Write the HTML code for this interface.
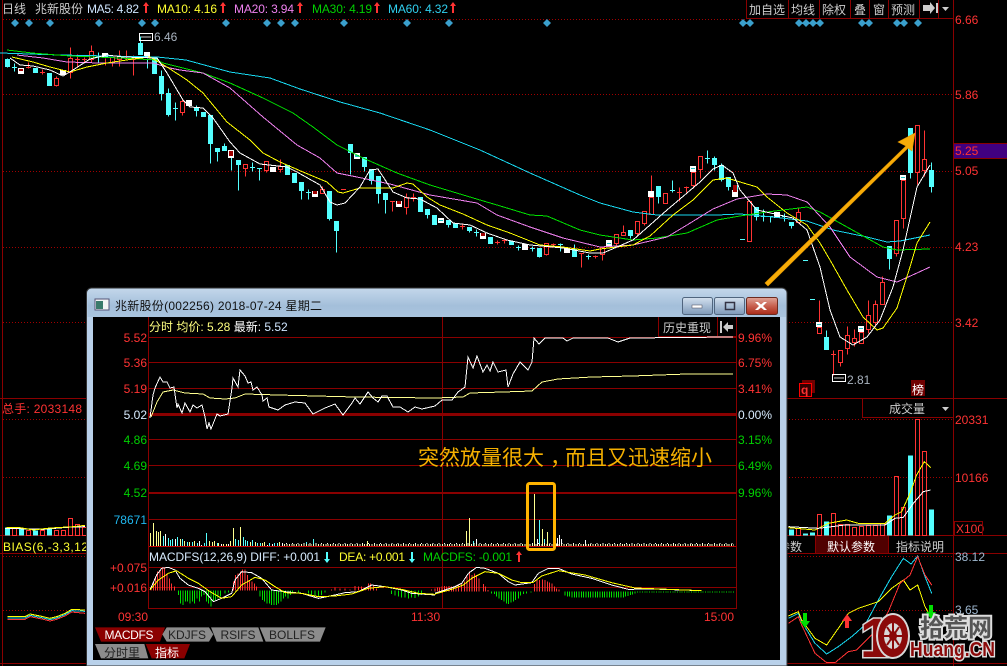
<!DOCTYPE html>
<html><head><meta charset="utf-8"><title>兆新股份</title>
<style>
html,body{margin:0;padding:0;background:#000;overflow:hidden}
svg{display:block}
text{font-family:"Liberation Sans","WenQuanYi Zen Hei","Noto Sans CJK SC",sans-serif;font-size:12px}
polyline{shape-rendering:crispEdges}
</style></head><body>
<svg width="1007" height="666" viewBox="0 0 1007 666" xmlns="http://www.w3.org/2000/svg">
<defs>
<linearGradient id="tb" x1="0" y1="0" x2="0" y2="1"><stop offset="0" stop-color="#c2d6ea"/><stop offset=".6" stop-color="#a4bfda"/><stop offset="1" stop-color="#a9c4de"/></linearGradient>
<linearGradient id="bn" x1="0" y1="0" x2="0" y2="1"><stop offset="0" stop-color="#d4e0ee"/><stop offset=".5" stop-color="#a8bdd4"/><stop offset="1" stop-color="#7f9ab8"/></linearGradient>
<linearGradient id="bx" x1="0" y1="0" x2="0" y2="1"><stop offset="0" stop-color="#e0a498"/><stop offset=".5" stop-color="#c8604f"/><stop offset="1" stop-color="#a82a18"/></linearGradient>
</defs>
<rect width="1007" height="666" fill="#000"/>

<!-- frame lines -->
<g stroke="#8a0000" fill="none" shape-rendering="crispEdges">
<path d="M2.5 0V666M953.5 0V666M0 398.5H953M0 535.5H953M0 553.5H953M0 663.5H953M953 398.5H1007M953 535.5H1007M953 553.5H1007M953 663.5H1007"/>
<path d="M746.5 0V18.5H953M788.5 0V18M819.5 0V18M850.5 0V18M869.5 0V18M888.5 0V18M919.5 0V18M938.5 0V18"/>
<path d="M862.5 398V417.5H953"/>
</g>
<g stroke="#a00000" stroke-dasharray="1 2" fill="none" shape-rendering="crispEdges">
<path d="M3 19.5H746M3 94.5H953M3 171.5H953M3 247.5H953M3 322.5H953M3 419.5H953M3 477.5H953M3 556.5H953M3 610.5H953"/>
</g>

<!-- top header -->
<text x="2" y="13" fill="#ccc">日线</text>
<text x="35" y="13" fill="#ccc" textLength="48">兆新股份</text>
<text x="87" y="13" textLength="52" fill="#cfe6ff">MA5: 4.82</text>
<text x="157" y="13" textLength="60" fill="#ffff30">MA10: 4.16</text>
<text x="234" y="13" textLength="60" fill="#ee80ee">MA20: 3.94</text>
<text x="312" y="13" textLength="60" fill="#00d000">MA30: 4.19</text>
<text x="388" y="13" textLength="60" fill="#30d0f0">MA60: 4.32</text>
<g fill="#f33">
<path d="M145 13V6h-2l3-4 3 4h-2v7z"/><path d="M222 13V6h-2l3-4 3 4h-2v7z"/><path d="M299 13V6h-2l3-4 3 4h-2v7z"/><path d="M376 13V6h-2l3-4 3 4h-2v7z"/><path d="M452 13V6h-2l3-4 3 4h-2v7z"/>
</g>
<g fill="#ccc" text-anchor="middle">
<text x="767" y="14">加自选</text><text x="803" y="14">均线</text><text x="834" y="14">除权</text><text x="860" y="14">叠</text><text x="879" y="14">窗</text><text x="903" y="14">预测</text>
</g>
<path d="M923 5h7V2l5 6-5 6v-3h-7zM936 3h2v10h-2z" fill="#ccc"/>
<path d="M942 7h7l-3.500 4z" fill="#ccc"/>

<!-- diamonds -->
<g fill="#3a9fcc">
<path d="M15 19l4 4-4 4-4-4zM29 19l4 4-4 4-4-4zM50 19l4 4-4 4-4-4zM99 19l4 4-4 4-4-4zM142 19l4 4-4 4-4-4zM155 19l4 4-4 4-4-4zM226 19l4 4-4 4-4-4zM267 19l4 4-4 4-4-4zM281 19l4 4-4 4-4-4zM295 19l4 4-4 4-4-4zM344 19l4 4-4 4-4-4zM407 19l4 4-4 4-4-4zM449 19l4 4-4 4-4-4zM547 19l4 4-4 4-4-4zM743 19l4 4-4 4-4-4zM750 19l4 4-4 4-4-4zM799 19l4 4-4 4-4-4zM806 19l4 4-4 4-4-4zM813 19l4 4-4 4-4-4zM820 19l4 4-4 4-4-4zM862 19l4 4-4 4-4-4zM869 19l4 4-4 4-4-4zM897 19l4 4-4 4-4-4zM904 19l4 4-4 4-4-4zM918 19l4 4-4 4-4-4z"/>
</g>

<!-- right axis labels -->
<rect x="954" y="143" width="53" height="16" fill="#400080"/>
<path d="M954 143.500H1007M954 158.500H1007" stroke="#8a0000"/>
<g fill="#f33">
<text x="955" y="24">6.66</text><text x="955" y="99">5.86</text><text x="955" y="155">5.25</text><text x="955" y="175">5.05</text><text x="955" y="251">4.23</text><text x="955" y="327">3.42</text>
<text x="955" y="424">20331</text><text x="955" y="482">10166</text><text x="956" y="533">X100</text>
<text x="2" y="413" textLength="80">总手: 2033148</text>
</g>
<rect x="954.500" y="521.500" width="28" height="14" fill="none" stroke="#8a0000"/>
<text x="955" y="561" fill="#9fb8d0">38.12</text><text x="955" y="614" fill="#9fb8d0">3.65</text>

<!-- candles -->
<g transform="translate(0,.5)" shape-rendering="crispEdges">
<path fill="#54ffff" stroke="#54ffff" d="M5.500 59h4V66h-4zM7.500 58V67M12 67h5M14.500 63V71M33.500 68h4V72h-4zM47.500 73h4V85h-4zM96 56h5M98.500 52V62M138.500 43h4V54h-4zM140.500 36V43M147.500 58V68M152.500 58h4V73h-4zM159.500 76h4V93h-4zM161.500 70V100M166.500 93h4V114h-4zM168.500 88V116M173 108h5M175.500 102V120M194.500 107h4V110h-4zM196.500 105V116M201.500 112h4V116h-4zM208.500 115h4V143h-4zM210.500 143V163M215.500 148h4V151h-4zM217.500 151V161M222.500 146h4V150h-4zM224.500 143V150M231.500 150V170M236.500 160h4V164h-4zM238.500 164V190M250 167h5M252.500 162V171M257 168h5M259.500 168V180M285.500 165h4V174h-4zM292.500 173h4V182h-4zM299.500 182h4V190h-4zM301.500 190V199M306 192h5M308.500 189V199M327.500 191h4V218h-4zM329.500 218V220M334.500 221h4V230h-4zM336.500 230V252M348.500 144h4V152h-4zM350.500 152V174M362.500 157h4V166h-4zM364.500 166V171M369.500 169h4V180h-4zM371.500 180V184M376.500 176h4V193h-4zM378.500 193V203M383.500 193h4V199h-4zM385.500 199V213M418.500 197h4V211h-4zM425.500 209h4V214h-4zM427.500 214V218M432.500 215h4V224h-4zM446.500 220h4V224h-4zM448.500 224V227M453.500 223h4V227h-4zM467.500 227h4V230h-4zM469.500 230V232M474 232h5M476.500 229V236M488.500 237h4V243h-4zM509.500 241h4V244h-4zM516 247h5M518.500 245V250M530 248h5M532.500 246V251M537.500 248h4V256h-4zM539.500 256V257M558 244h5M560.500 243V251M572.500 249h4V256h-4zM574.500 244V249M586 256h5M588.500 254V259M628.500 230h4V235h-4zM630.500 235V238M656.500 186h4V196h-4zM658.500 196V203M670 190h5M672.500 180V192M705 158h5M707.500 150V163M712.500 158h4V164h-4zM714.500 156V170M719.500 165h4V179h-4zM721.500 163V181M726.500 177h4V186h-4zM728.500 186V190M733.500 185h4V190h-4zM754.500 207h4V216h-4zM756.500 216V220M761 216h5M763.500 209V221M768 216h5M770.500 216V222M782 216h5M784.500 213V221M789.500 222h4V225h-4zM791.500 225V228M740 239h5M803 260h5M810 299h5M824.500 337h4V349h-4zM826.500 330V337M887.500 246h4V258h-4zM889.500 258V269M908.500 128h4V172h-4zM910.500 172V178M929.500 170h4V186h-4zM931.500 162V192"/>
<path fill="none" stroke="#f33" d="M26 67h5M28.500 62V68M40 72h5M42.500 69V74M54.500 78h4V85h-4zM56.500 76V78M56.500 85V86M68.500 58h4V72h-4zM70.500 47V58M70.500 72V78M75 59h5M77.500 54V66M82 59h5M84.500 57V62M89.500 51h4V59h-4zM91.500 45V51M91.500 59V62M105.500 58V65M110.500 57h4V62h-4zM112.500 62V66M117.500 56h4V59h-4zM119.500 50V56M119.500 59V66M126.500 50V60M131 59h5M133.500 55V75M180.500 101h4V112h-4zM182.500 98V101M182.500 112V115M243.500 164h4V168h-4zM245.500 168V176M264.500 161h4V170h-4zM266.500 170V172M278.500 166h4V169h-4zM280.500 159V166M280.500 169V172M320.500 189h4V193h-4zM322.500 186V189M341 189h5M390 201h5M392.500 201V211M404.500 197h4V207h-4zM406.500 193V197M406.500 207V214M411 197h5M413.500 193V201M460 226h5M462.500 224V229M495 242h5M497.500 240V244M502 240h5M504.500 238V243M544.500 243h4V254h-4zM546.500 254V255M551 244h5M553.500 243V246M579 253h5M581.500 253V267M593 256h5M595.500 255V258M600.500 247h4V254h-4zM602.500 254V260M614.500 234h4V243h-4zM616.500 243V245M621.500 232h4V235h-4zM623.500 225V232M635.500 221h4V233h-4zM637.500 233V235M642.500 211h4V223h-4zM644.500 223V225M649.500 197h4V214h-4zM651.500 175V191M663.500 193h4V203h-4zM677 192h5M679.500 187V201M684 187h5M686.500 186V192M691.500 172h4V185h-4zM693.500 185V188M698.500 156h4V169h-4zM700.500 169V178M747.500 201h4V241h-4zM796.500 212h4V222h-4zM798.500 208V212M798.500 222V223M817.500 327h4V333h-4zM819.500 300V322M831 354h5M833.500 350V375M838.500 350h4V362h-4zM840.500 362V366M845.500 335h4V348h-4zM847.500 326V335M847.500 348V354M852.500 338h4V342h-4zM854.500 329V338M854.500 342V346M859.500 332h4V343h-4zM866.500 315h4V329h-4zM868.500 300V315M868.500 329V333M873.500 304h4V322h-4zM875.500 300V304M875.500 322V325M880.500 282h4V304h-4zM882.500 276V282M894.500 220h4V253h-4zM896.500 253V256M901.500 180h4V218h-4zM903.500 218V228M915.500 125h4V172h-4zM917.500 172V184M922.500 159h4V170h-4zM924.500 130V159M924.500 170V176"/>
</g>
<!-- highlighted boxes -->
<path fill="#fff" d="M18 68h6v6h-6zM60 70h6v5h-6zM102 53h6v5h-6zM144 52h6v5h-6zM186 100h6v6h-6zM228 150h6v8h-6zM270 167h6v5h-6zM312 191h6v6h-6zM354 153h6v6h-6zM396 201h6v6h-6zM438 218h6v5h-6zM480 233h6v6h-6zM522 244h6v6h-6zM564 248h6v5h-6zM606 240h6v6h-6zM648 191h6v6h-6zM690 166h6v6h-6zM732 190h6v7h-6zM774 212h6v6h-6zM816 322h6v5h-6zM858 326h6v6h-6zM900 175h6v5h-6z"/>
<path fill="#a00000" d="M19 69h4v2h-4zM229 151h4v5h-4zM313 191h4v3h-4zM397 201h4v3h-4zM481 233h4v3h-4zM733 185h4v7h-4z"/>
<path fill="#20c0c0" d="M355 155h4v2h-4zM439 220h4v1h-4zM607 243h4v1h-4zM691 168h4v1h-4zM817 324h4v1h-4zM859 328h4v1h-4zM901 177h4v1h-4z"/>

<!-- MA lines -->
<g fill="none" stroke-width="1">
<polyline stroke="#18d8f0" points="0,53 60,55 157,57 186,60 230,72 270,78 300,89 340,102 380,113 430,130 480,150 530,173 580,195 600,203 633,212 657,215 717,215 740,214 773,217 807,221 833,230 867,237 887,242 900,241 930,235"/>
<polyline stroke="#00e000" points="7,50 32,53 70,56 120,58 157,60 163,63 203,73 230,83 263,98 293,113 313,127 337,145 363,158 397,173 430,185 480,200 497,205 530,215 547,216 580,230 600,235 633,240 657,238 687,233 717,220 740,216 767,212 807,207 820,212 847,227 883,247 897,250 930,249"/>
<polyline stroke="#ee80ee" points="17,55 43,58 67,62 100,63 153,63 170,68 180,70 203,73 230,88 263,117 297,145 320,158 337,173 357,177 390,184 430,195 477,203 497,215 530,227 563,238 600,247 633,245 667,237 687,225 713,209 737,199 767,194 787,195 807,202 830,227 850,257 877,277 897,282 917,273 930,267"/>
<polyline stroke="#ffff00" points="12,57 33,62 50,67 70,72 87,67 107,63 133,59 150,57 167,67 187,80 203,93 227,122 250,140 263,153 280,162 303,172 327,182 338,192 343,193 360,188 393,188 407,183 413,184 427,197 440,205 463,214 487,225 510,233 540,245 563,247 590,251 600,249 633,245 650,236 673,215 693,200 713,180 727,178 740,182 757,187 767,197 787,213 807,225 820,243 830,260 847,290 863,317 877,330 883,328 897,308 910,267 917,243 930,222"/>
<polyline stroke="#fff" points="10,58 20,65 33,66 50,70 63,76 73,70 90,59 107,55 123,57 157,58 167,73 183,100 190,107 203,108 213,118 230,142 240,153 260,164 287,167 297,172 320,185 330,202 337,205 345,203 360,187 370,170 378,169 393,192 407,198 420,199 437,208 453,223 470,225 487,233 507,240 530,245 563,248 590,253 603,253 617,247 633,240 650,225 667,210 687,193 700,182 713,169 722,165 733,173 740,190 757,210 793,218 807,230 820,267 830,310 840,337 853,345 867,337 880,320 893,287 903,250 917,187 930,165"/>
</g>

<!-- markers -->
<g fill="none" stroke="#fff"><rect x="139.500" y="33.500" width="13" height="7"/><rect x="832.500" y="374.500" width="13" height="7"/></g>
<path d="M141 37h10M834 378h10" stroke="#ccc"/>
<text x="154" y="41" fill="#aab4c0">6.46</text>
<text x="847" y="384" fill="#aab4c0">2.81</text>
<rect x="802" y="380" width="13" height="13" fill="#700000"/>
<rect x="799.500" y="383.500" width="12" height="13" fill="#300" stroke="#f00"/>
<text x="801" y="394" fill="#f33" font-weight="bold">q</text>
<rect x="911" y="380" width="14" height="16" fill="#700000"/>
<text x="912" y="394" fill="#fff">榜</text>

<!-- right panel -->
<text x="889" y="413" fill="#ccc">成交量</text>
<path d="M942 407h7l-3.500 4z" fill="#ccc"/>
<rect x="815" y="536" width="73" height="17" fill="#500000"/>
<path d="M815.500 535V553M888.500 535V553" stroke="#8a0000"/>
<text x="778" y="551" fill="#ccc">参数</text>
<text x="827" y="551" fill="#fff">默认参数</text>
<text x="896" y="551" fill="#ccc">指标说明</text>

<g transform="translate(0,.5)" shape-rendering="crispEdges">
<path fill="#54ffff" d="M789 529h5v6h-5zM803 533h5v2h-5zM810 532h5v3h-5zM824 521h5v14h-5zM887 515h5v20h-5zM908 455h5v80h-5zM929 509h5v26h-5zM5 527h5v8h-5zM19 528h5v7h-5zM33 530h5v5h-5zM47 528h5v7h-5z"/>
<path fill="none" stroke="#f33" d="M796.500 528h4V535h-4zM817.500 514h4V535h-4zM831.500 513h4V535h-4zM838.500 524h4V535h-4zM845.500 524h4V535h-4zM852.500 527h4V535h-4zM859.500 526h4V535h-4zM866.500 525h4V535h-4zM873.500 525h4V535h-4zM880.500 523h4V535h-4zM894.500 476h4V535h-4zM901.500 507h4V535h-4zM915.500 419h4V535h-4zM922.500 451h4V535h-4zM12.500 528h4V535h-4zM26.500 530h4V535h-4zM40.500 530h4V535h-4zM54.500 530h4V535h-4zM61.500 530h4V535h-4zM68.500 518h4V535h-4zM75.500 524h4V535h-4zM82.500 527h4V535h-4z"/>
</g>
<g fill="none">
<g transform="translate(785,380) scale(.33333)" stroke-width="3">
<polyline stroke="#ffff00" points="10,443 90,450 130,430 185,420 220,430 300,430 330,405 350,395 375,340 395,285 418,245 437,263"/>
<polyline stroke="#fff" points="10,440 100,445 180,435 300,435 330,415 355,412 385,370 415,335 437,330"/>
<polyline stroke="#18d8f0" points="10,715 40,700 50,725 90,790 125,822 160,800 200,770 240,735 280,660 320,590 355,535 378,552 398,528 420,590 440,640"/>
<polyline stroke="#ffff00" points="10,708 40,695 50,720 90,775 125,795 160,745 190,700 220,685 280,665 320,625 355,600 375,630 398,615 420,680 437,710"/>
<polyline stroke="#f33" points="10,730 40,710 50,735 90,820 125,848 150,848 190,815 215,810 280,745 310,695 345,610 375,585 398,530 420,585 440,615"/>
</g>
<g transform="translate(0,390) scale(.33333)" stroke-width="3">
<polyline stroke="#fff" points="15,415 130,418 200,412 255,410"/>
<polyline stroke="#ffff00" points="20,412 55,412 100,420 150,414 220,410 255,406"/>
<polyline stroke="#ffff00" points="22,680 75,680 90,672 130,680 150,685 170,680 195,670 215,658 255,660"/>
<polyline stroke="#18d8f0" points="22,684 75,684 90,676 130,684 150,689 170,684 195,674 215,662 255,664"/>
<polyline stroke="#f33" points="22,688 75,688 90,680 130,688 150,693 170,688 195,678 215,666 255,670"/>
</g>
</g>
<path fill="#00e000" d="M803 613h4v8h3l-5 7-5-7h3zM929 605h4v7h3l-5 7-5-7h3z"/>
<path fill="#f33" d="M845 628v-7h-3l5-7 5 7h-3v7z"/>
<text x="3" y="551" fill="#ffff30" textLength="96">BIAS(6,-3,3,12,3</text>

<!-- watermark -->
<text x="860" y="657" fill="#8b0a0a" stroke="#d8d8d8" stroke-width="3" paint-order="stroke" style="font-size:56px;font-weight:bold;font-family:'Liberation Sans'">1</text>
<ellipse cx="893" cy="636" rx="17" ry="23" fill="#d8d8d8"/>
<ellipse cx="893" cy="636" rx="15" ry="21" fill="#8b0a0a"/>
<ellipse cx="893" cy="636" rx="9" ry="13" fill="#d8d8d8"/>
<path d="M893 623V649M884 636H902M887 627L899 645M899 627L887 645" stroke="#8b0a0a" stroke-width="2"/>
<ellipse cx="893" cy="636" rx="4" ry="5" fill="#8b0a0a"/>
<text x="920" y="636" fill="#555" stroke="#ddd" stroke-width="4" paint-order="stroke" style="font-size:24px;font-family:'Noto Sans CJK SC',sans-serif;font-weight:bold">拾荒网</text>
<text x="910" y="656" fill="#8b0a0a" stroke="#ddd" stroke-width="3" paint-order="stroke" textLength="85" lengthAdjust="spacingAndGlyphs" style="font-size:20px;font-weight:bold">Huang.CN</text>

<!-- gold arrow -->
<path fill="#f7ac08" stroke="#e89a00" stroke-width=".6" d="M765 283L906 146 898 142 915 133 912 151 908 148 768 286z"/>

<!-- WINDOW -->
<path d="M86.500 666V293a5 5 0 0 1 5-5H782a5 5 0 0 1 5 5V666z" fill="#b9d1ea" stroke="#333"/>
<path d="M87.500 317V294a5 5 0 0 1 5-5H781a5 5 0 0 1 5 5V317z" fill="url(#tb)"/>
<rect x="93" y="317" width="687" height="343" fill="#000"/>
<rect x="95" y="299" width="14" height="11" fill="#f4f4f4" stroke="#557"/>
<rect x="96" y="301" width="7" height="8" fill="#3a7a6a"/>
<text x="115" y="310" fill="#111" textLength="207">兆新股份(002256) 2018-07-24 星期二</text>

<rect x="682.500" y="297.500" width="30" height="17" rx="2" fill="url(#bn)" stroke="#50657e"/>
<rect x="692" y="305" width="10" height="3" fill="#fff" stroke="#445" stroke-width=".5"/>
<rect x="714.500" y="297.500" width="30" height="17" rx="2" fill="url(#bn)" stroke="#50657e"/>
<rect x="725.500" y="302.500" width="9" height="7" fill="none" stroke="#334" stroke-width="1.500"/>
<rect x="746.500" y="297.500" width="31" height="17" rx="2" fill="url(#bx)" stroke="#6b2a20"/>
<path d="M758 302l3 2.500 3-2.500h3l-4 4 4 4h-3l-3-2.500-3 2.500h-3l4-4-4-4z" fill="#fff"/>

<g stroke="#8a0000" fill="none" shape-rendering="crispEdges">
<path d="M148.500 317V609M736.500 317V609M442.500 317V609M149 337.500H736M149 362.500H736M149 388.500H736M149 439.500H736M149 465.500H736M149 519.500H736M149 567.500H736M149 587.500H736M149 608.500H736M658.500 317V336.500H736M717.500 317V336"/>
<path d="M149 414.500H736" stroke-width="3"/>
<path d="M149 493H736" stroke-width="2"/>
<path d="M149 546.500H736" stroke="#c00000"/>
</g>

<text x="149" y="331"><tspan fill="#ffff80">分时 均价: 5.28 </tspan><tspan fill="#fff">最新: </tspan><tspan fill="#cfe6ff">5.52</tspan></text>
<text x="663" y="332" fill="#ccc" textLength="48">历史重现</text>
<path d="M720 321h2v12h-2zM723 327l5-5v3h5v4h-5v3z" fill="#ccc"/>

<g text-anchor="end">
<text x="147" y="342" fill="#f33">5.52</text><text x="147" y="367" fill="#f33">5.36</text><text x="147" y="393" fill="#f33">5.19</text><text x="147" y="419" fill="#d8ecff">5.02</text>
<text x="147" y="444" fill="#00d000">4.86</text><text x="147" y="470" fill="#00d000">4.69</text><text x="147" y="497" fill="#00d000">4.52</text><text x="147" y="524" fill="#20b8f0">78671</text>
<text x="147" y="572" fill="#f33">+0.075</text><text x="147" y="592" fill="#f33">+0.016</text>
</g>
<g>
<text x="738" y="342" fill="#f33">9.96%</text><text x="738" y="367" fill="#f33">6.75%</text><text x="738" y="393" fill="#f33">3.41%</text><text x="738" y="419" fill="#d8ecff">0.00%</text>
<text x="738" y="444" fill="#00d000">3.15%</text><text x="738" y="470" fill="#00d000">6.49%</text><text x="738" y="497" fill="#00d000">9.96%</text>
</g>

<!-- price lines -->
<g fill="none">
<polyline stroke="#ffff90" points="151,417 157,402 163,392 173,390 185,393 203,394 210,398 225,399 235,398 245,394 278,395 355,397 435,398 463,397 470,393 503,392 532,391 542,382 558,379 592,377 632,376 687,374 733,374"/>
<polyline stroke="#fff" points="150,418 153,395 155,388 160,377 163,382 167,382 170,388 174,387 177,408 178,404 182,413 185,403 190,412 193,405 197,408 202,405 205,417 207,429 209,423 211,429 217,414 220,416 228,414 232,388 233,378 238,387 240,370 245,376 248,383 251,382 253,390 257,387 262,395 263,401 267,398 269,407 278,410 285,405 295,402 305,403 313,414 325,408 335,404 343,415 352,403 355,398 360,404 368,392 373,398 378,402 382,396 387,396 393,407 400,407 408,412 415,407 422,409 435,406 442,400 452,400 458,392 465,387 468,357 473,368 477,356 483,372 487,365 490,371 493,362 498,372 506,370 508,387 513,374 520,362 528,370 532,362 534,338 539,344 545,338 563,338 567,341 573,338 608,338 618,342 630,338 733,337"/>
</g>

<!-- volume bars -->
<g fill="none" shape-rendering="crispEdges">
<path stroke="#ffff90" d="M150.500 546v-13M153.500 546v-23M156.500 546v-15M158.500 546v-14M160.500 546v-15M180.500 546v-7M184.500 546v-5M189.500 546v-4M194.500 546v-5M209.500 546v-5M212.500 546v-4M214.500 546v-5M218.500 546v-3M223.500 546v-2M226.500 546v-2M230.500 546v-5M233.500 546v-18M240.500 546v-19M250.500 546v-4M255.500 546v-4M262.500 546v-3M264.500 546v-4M279.500 546v-4M367.500 546v-5M466.500 546v-15M469.500 546v-28M534.500 546v-52M542.500 546v-17M547.500 546v-14"/>
<path stroke="#54ffff" d="M163.500 546v-10M168.500 546v-8M170.500 546v-6M172.500 546v-7M177.500 546v-9M182.500 546v-7M187.500 546v-4M192.500 546v-4M197.500 546v-3M204.500 546v-3M206.500 546v-13M217.500 546v-3M235.500 546v-7M238.500 546v-6M243.500 546v-9M245.500 546v-6M247.500 546v-5M252.500 546v-6M257.500 546v-3M260.500 546v-3M269.500 546v-3M274.500 546v-3M277.500 546v-3M306.500 546v-4M313.500 546v-7M473.500 546v-5M539.500 546v-26M544.500 546v-7"/>
<path stroke="#fff" d="M165.500 546v-12M175.500 546v-7M199.500 546v-5M201.500 546v-1M221.500 546v-2M228.500 546v-2M267.500 546v-1M272.500 546v-2M282.500 546v-3M476.500 546v-7M537.500 546v-7M555.500 546v-5M557.500 546v-8M559.500 546v-11M561.500 546v-7M585.500 546v-6"/>
<path stroke="#ffffc0" stroke-width="2" stroke-dasharray="1 1.430" d="M284 545H734"/>
<path stroke="#fff" stroke-dasharray="1 4.860" d="M286 543.500H734"/>
</g>

<!-- orange box -->
<rect x="527.500" y="483.500" width="27" height="66" rx="2" fill="none" stroke="#ffb400" stroke-width="3"/>
<text y="465" fill="#f5b000" style="font-size:21px;font-family:'Noto Sans CJK SC','WenQuanYi Zen Hei',sans-serif"><tspan x="418">突然放量很大</tspan><tspan x="550">，</tspan><tspan x="565">而且又迅速缩小</tspan></text>

<!-- MACD header -->
<text x="149" y="561" fill="#d8ecff" textLength="171">MACDFS(12,26,9) DIFF: +0.001</text>
<path fill="#54ffff" d="M326 552h2v7h2l-3 4-3-4h2z"/>
<text x="339" y="561" fill="#ffff30" textLength="66">DEA: +0.001</text>
<path fill="#54ffff" d="M411 552h2v7h2l-3 4-3-4h2z"/>
<text x="423" y="561" fill="#00d000" textLength="89">MACDFS: -0.001</text>
<path fill="#f33" d="M518 562v-7h-2l3-4 3 4h-2v7z"/>

<!-- MACD bars -->
<g transform="translate(85,540) scale(.33333)" fill="none" stroke-width="3" shape-rendering="crispEdges">
<path stroke="#f33" d="M198 152V145M205 152V125M212 152V110M218 152V95M225 152V90M232 152V85M239 152V85M246 152V100M253 152V115M260 152V130M268 152V140M445 152V125M452 152V105M459 152V100M466 152V95M473 152V88M480 152V88M487 152V105M494 152V120M501 152V125M508 152V130M515 152V140M740 152V148M750 152V142M765 152V145M780 152V145M795 152V148M810 152V138M820 152V140M830 152V140M840 152V143M850 152V130M857 152V130M865 152V135M875 152V145M1040 152V148"/>
<path stroke="#00e000" d="M280 152V165M287 152V190M294 152V195M301 152V185M308 152V185M315 152V190M322 152V185M329 152V190M336 152V175M343 152V185M350 152V170M357 152V165M364 152V185M371 152V190M378 152V200M385 152V185M392 152V180M399 152V175M406 152V170M420 152V160M430 152V158M525 152V170M532 152V180M539 152V185M546 152V190M553 152V190M560 152V195M567 152V195M574 152V195M581 152V190M588 152V185M595 152V175M602 152V170M609 152V175M616 152V165M623 152V160M640 152V157M670 152V160M680 152V165M690 152V170M700 152V168M710 152V165M720 152V158M920 152V162M930 152V166M940 152V170M950 152V172M960 152V172M970 152V175M980 152V172M990 152V174M1000 152V170M1010 152V165"/>
<polyline stroke="#fff" points="195,150 215,105 230,85 250,82 270,90 285,115 310,135 340,145 360,155 385,185 410,175 440,160 450,120 470,95 500,98 530,115 560,150 600,155 650,160 700,175 750,165 780,158 820,155 860,135 900,140 950,150 980,160 1050,165"/>
<polyline stroke="#ffff00" points="195,150 220,120 250,100 275,92 310,115 340,130 375,155 410,175 440,170 470,135 510,112 540,120 570,140 600,158 650,160 700,170 750,168 800,162 850,145 900,140 950,148 1000,160 1050,163"/>
</g>
<g transform="translate(435,430) scale(.33333)" fill="none" stroke-width="3" shape-rendering="crispEdges">
<path stroke="#f33" d="M0 484V475M7 484V472M14 484V472M21 484V470M28 484V468M35 484V470M42 484V468M49 484V470M56 484V472M63 484V468M70 484V465M79 484V460M88 484V455M96 484V440M104 484V425M111 484V435M118 484V430M125 484V435M132 484V445M145 484V462M152 484V470M159 484V480M298 484V462M306 484V450M314 484V450M322 484V448M330 484V450M337 484V455M344 484V458M351 484V460M358 484V470M365 484V475M372 484V478"/>
<path stroke="#00e000" d="M170 484V490M178 484V492M185 484V500M192 484V505M200 484V510M207 484V515M214 484V520M221 484V522M228 484V518M235 484V515M242 484V510M250 484V505M257 484V497M265 484V492M275 484V490M288 484V488M390 484V497M397 484V500M404 484V500M411 484V502M418 484V502M425 484V503M432 484V503M439 484V503M446 484V502M453 484V503M460 484V503M467 484V503M474 484V503M481 484V503M488 484V503M495 484V503M502 484V503M509 484V503M516 484V502M523 484V502M530 484V503M537 484V503M544 484V503M551 484V503M558 484V503M565 484V503M572 484V500M579 484V498M586 484V495M593 484V493M600 484V490M607 484V488"/>
<path stroke="#00e000" stroke-dasharray="3 4" d="M614 486.500H900"/>
<polyline stroke="#fff" points="0,490 30,480 60,470 80,460 100,430 125,412 150,415 190,430 220,455 240,465 290,458 310,430 340,415 370,415 410,432 470,445 530,465 580,478 650,477 800,482"/>
<polyline stroke="#ffff00" points="0,492 50,478 85,465 110,445 150,425 190,430 230,450 260,458 295,457 320,438 370,422 450,435 530,458 600,474 800,482"/>
</g>

<text x="118" y="621" fill="#f33">09:30</text>
<text x="411" y="621" fill="#f33">11:30</text>
<text x="704" y="621" fill="#f33">15:00</text>

<!-- tabs -->
<g transform="translate(85,540) scale(.33333)">
<polygon fill="#8b0000" points="30,262 240,262 225,305 48,305"/>
<polygon fill="#8c8c8c" points="245,262 372,262 385,283 372,305 245,305 232,283"/>
<polygon fill="#8c8c8c" points="378,262 520,262 535,305 395,305"/>
<polygon fill="#8c8c8c" points="524,262 722,262 705,305 542,305"/>
<polygon fill="#8c8c8c" points="30,312 178,312 190,355 48,355"/>
<polygon fill="#8b0000" points="182,312 315,312 298,355 200,355"/>
</g>
<g text-anchor="middle">
<text x="129" y="639" fill="#fff" textLength="49">MACDFS</text>
<text x="187" y="639" fill="#222" textLength="38">KDJFS</text>
<text x="238" y="639" fill="#222" textLength="35">RSIFS</text>
<text x="292" y="639" fill="#222" textLength="46">BOLLFS</text>
<text x="122" y="657" fill="#222">分时里</text>
<text x="167" y="657" fill="#fff">指标</text>
</g>
</svg>
</body></html>
